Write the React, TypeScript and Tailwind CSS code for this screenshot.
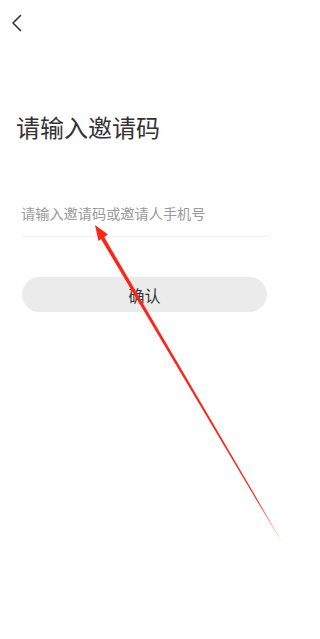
import React from "react";

export default function App() {
  return (
    <div
      className="relative w-[303px] h-[639px] bg-white overflow-hidden"
      style={{ fontFamily: '"Noto Sans CJK SC", "Noto Sans", sans-serif' }}
    >
      <div className="h-[46px] pl-[11px] pt-[14px]">
        <svg width="12" height="18" viewBox="0 0 12 18" fill="none">
          <path d="M9.5 1.5 L2 9 L9.5 16.5" stroke="#333" strokeWidth="1.6" strokeLinecap="round" strokeLinejoin="round" />
        </svg>
      </div>
      <div className="px-4 pt-[68px]">
        <h1 className="text-[24px] leading-[26px] text-[#333] font-normal">请输入邀请码</h1>
      </div>
      <div className="pl-[21px] pt-[64px]">
        <div className="w-[248px] border-b border-[#f1f1f1] pb-[14px]">
          <div className="text-[14.2px] leading-[18px] text-[#9a9a9a] whitespace-nowrap">请输入邀请码或邀请人手机号</div>
        </div>
      </div>
      <div className="pl-[22px] pt-[40px]">
        <button className="w-[245px] h-[35px] rounded-full bg-[#ebebeb] text-[16px] text-[#333]">确认</button>
      </div>
      <svg className="absolute left-0 top-0 pointer-events-none" width="303" height="639" viewBox="0 0 303 639">
        <defs>
          <linearGradient id="g" gradientUnits="userSpaceOnUse" x1="95" y1="226" x2="283" y2="544">
            <stop offset="0" stopColor="#ff2318" />
            <stop offset="0.85" stopColor="#ff2318" />
            <stop offset="1" stopColor="#ff2318" stopOpacity="0" />
          </linearGradient>
        </defs>
        <polygon
          points="95,225 108,234.5 104.2,237 283.3,543.8 282.7,544.2 101,239 98.5,241"
          fill="url(#g)"
        />
      </svg>
    </div>
  );
}
